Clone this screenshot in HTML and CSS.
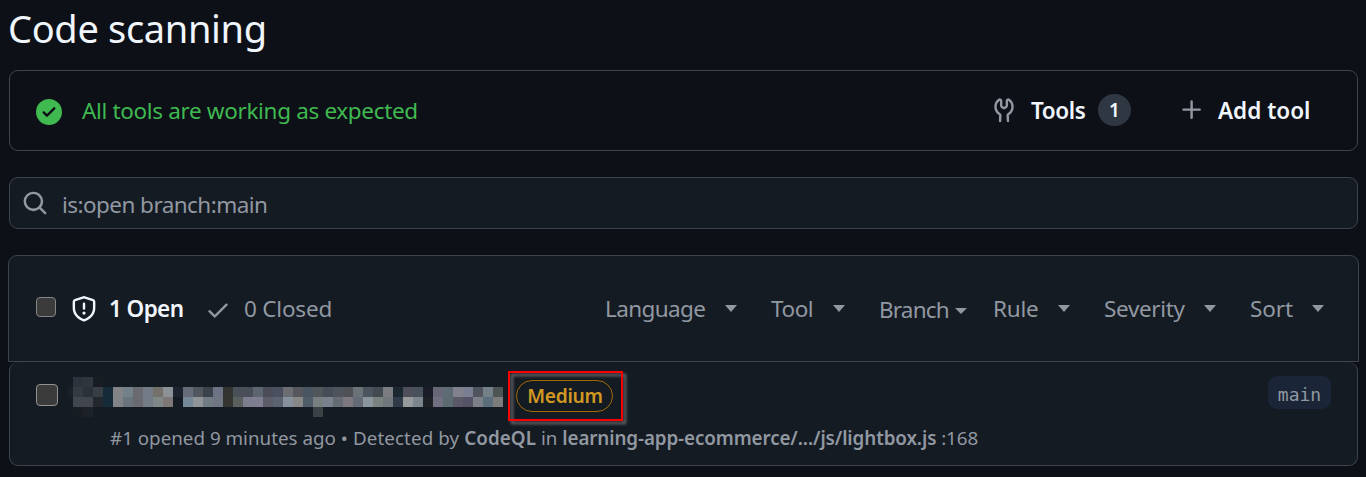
FILE: index.html
```
<!DOCTYPE html>
<html lang="en">
<head>
<meta charset="utf-8">
<title>Code scanning</title>
<link rel="stylesheet" href="styles.css">
</head>
<body>
<h1 class="title">Code scanning</h1>

<section class="status">
  <svg class="icon ok" viewBox="0 0 16 16"><path d="M8 16A8 8 0 1 1 8 0a8 8 0 0 1 0 16Zm3.78-9.72a.751.751 0 0 0-.018-1.042.751.751 0 0 0-1.042-.018L6.75 9.19 5.28 7.72a.751.751 0 0 0-1.042.018.751.751 0 0 0-.018 1.042l2 2a.75.75 0 0 0 1.06 0Z"/></svg>
  <span class="status-text">All tools are working as expected</span>
  <svg class="icon tools-icon" viewBox="0 0 16 16"><path d="M5.433 2.304A4.492 4.492 0 0 0 3.5 6c0 1.598.832 3.002 2.09 3.802.518.328.929.923.902 1.64v.008l-.164 3.337a.75.75 0 1 1-1.498-.073l.163-3.33c.002-.085-.05-.216-.207-.316A5.996 5.996 0 0 1 2 6a5.993 5.993 0 0 1 2.567-4.92 1.482 1.482 0 0 1 1.673-.04c.462.296.76.827.76 1.423v2.82c0 .082.041.16.11.206l.75.51a.25.25 0 0 0 .28 0l.75-.51A.249.249 0 0 0 9 5.282V2.463c0-.596.298-1.127.76-1.423a1.482 1.482 0 0 1 1.673.04A5.993 5.993 0 0 1 14 6a5.996 5.996 0 0 1-2.786 5.068c-.157.1-.209.23-.207.315l.163 3.33a.752.752 0 0 1-1.094.714.75.75 0 0 1-.404-.64l-.164-3.345c-.027-.717.384-1.312.902-1.64A4.496 4.496 0 0 0 12.5 6a4.492 4.492 0 0 0-1.933-3.696c-.024.017-.067.067-.067.16v2.818a1.75 1.75 0 0 1-.767 1.448l-.75.51a1.75 1.75 0 0 1-1.966 0l-.75-.51A1.75 1.75 0 0 1 5.5 5.282V2.463c0-.092-.043-.142-.067-.159Z"/></svg>
  <span class="strong tools">Tools</span>
  <span class="count">1</span>
  <svg class="icon plus" viewBox="0 0 16 16"><path d="M7.75 2a.75.75 0 0 1 .75.75V7h4.25a.75.75 0 0 1 0 1.5H8.5v4.25a.75.75 0 0 1-1.5 0V8.5H2.75a.75.75 0 0 1 0-1.5H7V2.75A.75.75 0 0 1 7.75 2Z"/></svg>
  <span class="strong add">Add tool</span>
</section>

<div class="search">
  <svg class="icon" viewBox="0 0 16 16"><path d="M10.68 11.74a6 6 0 0 1-7.922-8.982 6 6 0 0 1 8.982 7.922l3.04 3.04a.749.749 0 0 1-.326 1.275.749.749 0 0 1-.734-.215ZM11.5 7a4.499 4.499 0 1 0-8.997 0A4.499 4.499 0 0 0 11.5 7Z"/></svg>
  <span class="query">is:open branch:main</span>
</div>

<header class="list-head">
  <span class="box"></span>
  <svg class="icon shield" viewBox="0 0 16 16"><path d="m8.533.133 5.25 1.68A1.75 1.75 0 0 1 15 3.48V7c0 1.566-.32 3.182-1.303 4.682-.983 1.498-2.585 2.813-5.032 3.855a1.697 1.697 0 0 1-1.33 0c-2.447-1.042-4.049-2.357-5.032-3.855C1.32 10.182 1 8.566 1 7V3.48a1.755 1.755 0 0 1 1.217-1.667l5.25-1.68a1.748 1.748 0 0 1 1.066 0Zm-.61 1.429.001.001-5.25 1.68a.251.251 0 0 0-.174.237V7c0 1.36.275 2.666 1.057 3.859.784 1.194 2.121 2.342 4.366 3.298a.196.196 0 0 0 .154 0c2.245-.957 3.582-2.103 4.366-3.297C13.225 9.666 13.5 8.358 13.5 7V3.48a.25.25 0 0 0-.174-.238l-5.25-1.68a.25.25 0 0 0-.153 0ZM8.75 4.75v3a.75.75 0 0 1-1.5 0v-3a.75.75 0 0 1 1.5 0ZM9 10.5a1 1 0 1 1-2 0 1 1 0 0 1 2 0Z"/></svg>
  <span class="strong open">1 Open</span>
  <svg class="icon check" viewBox="0 0 16 16"><path d="M13.78 4.22a.75.75 0 0 1 0 1.06l-7.25 7.25a.75.75 0 0 1-1.06 0L2.22 9.28a.751.751 0 0 1 .018-1.042.751.751 0 0 1 1.042-.018L6 10.94l6.72-6.72a.75.75 0 0 1 1.06 0Z"/></svg>
  <span class="closed">0 Closed</span>
  <nav class="filters">
    <span class="filter language">Language</span>
    <span class="filter tool">Tool</span>
    <span class="filter branch">Branch</span>
    <span class="filter rule">Rule</span>
    <span class="filter severity">Severity</span>
    <span class="filter sort">Sort</span>
  </nav>
</header>

<article class="row">
  <span class="box large"></span>
  <div class="content">
    <div class="line">
      <svg class="mosaic" id="mosaic" width="435" height="40" shape-rendering="crispEdges"></svg>
      <span class="severity-pill">Medium<i class="marker"></i></span>
    </div>
    <p class="meta"><span class="m-open">#1 opened 9 minutes ago</span> <span class="m-by">• Detected by</span> <b class="m-tool">CodeQL</b> <span class="m-in">in</span> <b class="m-path">learning-app-ecommerce/.../js/lightbox.js</b> <span class="m-line">:168</span></p>
  </div>
  <span class="branch-tag">main</span>
</article>
<script src="mosaic.js"></script>
</body>
</html>
```
FILE: styles.css
```
* { box-sizing: border-box; }
body {
  margin: 0;
  height: 477px;
  overflow: hidden;
  background: #0d1017;
  color: #9198a1;
  font: 22.5px/32px "Noto Sans", "Open Sans", sans-serif;
  white-space: nowrap;
}
.title {
  margin: 0 0 0 8px;
  height: 70px;
  padding-top: 3px;
  font-size: 38px;
  line-height: 50px;
  font-weight: 400;
  letter-spacing: -0.33px;
  color: #f0f6fc;
}
.icon { width: 26px; height: 26px; flex: none; fill: currentColor; }
.strong { font-weight: 600; color: #f0f6fc; }

.status {
  display: flex;
  align-items: center;
  width: 1349px;
  height: 81px;
  margin-left: 9px;
  padding-left: 26px;
  border: 1px solid #3d444d;
  border-radius: 9px;
}
.ok { color: #3fb950; margin-top: 2px; }
.status-text { width: 909px; margin-left: 20px; color: #3fb950; letter-spacing: -0.34px; }
.tools-icon { margin-top: -1px; }
.tools { width: 67px; margin: 1px 0 0 14px; letter-spacing: -0.4px; }
.count {
  width: 33px;
  height: 32px;
  margin-top: -2px;
  border-radius: 16px;
  background: #2f3742;
  color: #f0f6fc;
  font-size: 19px;
  font-weight: 600;
  text-align: center;
}
.plus { margin: -1px 13px 0 48px; }
.add { margin-top: 1px; }

.search {
  display: flex;
  align-items: center;
  width: 1349px;
  height: 52px;
  margin: 26px 0 0 9px;
  padding-left: 12px;
  border: 1px solid #3d444d;
  border-radius: 9px;
  background: #151b23;
}
.query { margin: 4px 0 0 14px; letter-spacing: -0.55px; }

.list-head {
  display: flex;
  align-items: center;
  width: 1351px;
  height: 107px;
  margin: 26px 0 0 8px;
  padding-left: 27px;
  border: 1px solid #3d444d;
  border-radius: 9px 9px 0 0;
  background: #151b23;
}
.box {
  width: 20px;
  height: 20px;
  margin-top: -3px;
  flex: none;
  border: 1px solid #858585;
  border-radius: 4px;
  background: #3b3b3b;
}
.box.large { width: 22px; height: 22px; margin: 22px 0 0; border-color: #929292; }
.shield { margin-left: 15px; color: #f0f6fc; }
.open { width: 96px; margin: 1px 0 0 12px; letter-spacing: -0.6px; }
.closed { width: 361px; margin-left: 13px; letter-spacing: -0.2px; }
.check { margin-top: 2px; }
.filters { display: flex; }
.filter { display: flex; align-items: center; justify-content: space-between; }
.filter::after {
  content: "";
  width: 12px;
  height: 7px;
  background: currentColor;
  clip-path: polygon(0 0, 100% 0, 50% 100%);
}
.language { width: 132px; letter-spacing: -0.6px; }
.tool { width: 74px; margin-left: 34px; letter-spacing: -0.45px; }
.branch { width: 88px; margin: 2px 0 0 34px; letter-spacing: -0.8px; }
.branch::after { height: 6px; margin-top: 3px; }
.rule { width: 77px; margin-left: 26px; letter-spacing: -0.2px; }
.severity { width: 112px; margin-left: 34px; letter-spacing: -0.35px; }
.sort { width: 74px; margin-left: 34px; letter-spacing: -0.1px; }

.row {
  display: flex;
  align-items: flex-start;
  width: 1349px;
  height: 104px;
  margin-left: 9px;
  padding-left: 26px;
  border: 1px solid #3d444d;
  border-top: 0;
  border-radius: 9px;
  background: #151b23;
}
.content { width: 1200px; margin-left: 10px; padding-top: 15px; }
.line { display: flex; height: 43px; }
.mosaic { flex: none; }
.severity-pill {
  position: relative;
  width: 97px;
  height: 32px;
  margin: 3px 0 0 13px;
  border: 1px solid #9e6a03;
  border-radius: 16px;
  color: #d29922;
  font-size: 19.2px;
  font-weight: 600;
  line-height: 30px;
  letter-spacing: -0.3px;
  text-align: center;
  text-indent: 1px;
}
.marker {
  position: absolute;
  inset: -10px -11px -10px -9px;
  border: 2px solid #f00;
  filter: drop-shadow(3px 3px 1.5px #777);
}
.meta { margin: 2px 0 0 42px; font-size: 18.8px; }
.meta b { font-weight: 600; }
.m-by { letter-spacing: 0.1px; }
.m-tool { letter-spacing: 0.1px; }
.m-path { letter-spacing: -0.1px; }
.m-line { letter-spacing: -0.1px; }
.branch-tag {
  width: 63px;
  height: 33px;
  margin-top: 14px;
  border-radius: 9px;
  background: #1a2538;
  font: 18px/37px "DejaVu Sans Mono", monospace;
  text-align: center;
}
```
FILE: mosaic.js
```
// Pixelated title: [x, y, width, colour] blocks, 10px tall.
const blocks = [
  [5, 0, 10, "2d333c"], [15, 0, 10, "30363e"], [25, 0, 10, "181c23"],
  [0, 10, 5, "1b2128"], [5, 10, 10, "333a42"], [15, 10, 10, "2b3139"], [25, 10, 10, "383e46"],
  [5, 20, 20, "40454e"], [25, 20, 10, "23272e"], [5, 30, 10, "181d24"], [15, 30, 10, "1d2229"],
  [245, 30, 10, "3b4144"]
];
const upper = "162b38 818387 74808a 6a6b70 727b86 74716b 8b9194 1e242f 666d79 52565f 3c424c 6b7385 343430 495058 4a4e59 5c6570 4a4d58 4a5060 6c6d73 55575d 485662 505659 474d57 4e535e 4f5157 6a7478 4c5460 454951 7b7d82 1b2831 4e4f5b 47505b 1a1c27 676778 5d6c74 81818e 7b7d91 50545f 748087 4e5454".split(" ");
const lower = "162b38 818387 6a747d 6a6b70 727b86 7f8886 7e7778 151b23 758897 929597 707b83 707684 343430 5a605d 7c7e90 7f7e90 5c5c69 5b6370 87919b 888888 4f5d68 777f81 79818e 666c74 7d787d 646b76 8a959e 7a827f 72777b 2f3b49 969a9b 7a858d 1e2225 717082 5c6a72 5b5867 555467 7c8088 5a6e7b 7c7c7c".split(" ");
upper.forEach((c, i) => blocks.push([35 + i * 10, 10, 10, c]));
lower.forEach((c, i) => blocks.push([35 + i * 10, 20, 10, c]));
document.getElementById("mosaic").innerHTML = blocks
  .map(([x, y, w, c]) => `<rect x="${x}" y="${y}" width="${w}" height="10" fill="#${c}"/>`)
  .join("");
```
